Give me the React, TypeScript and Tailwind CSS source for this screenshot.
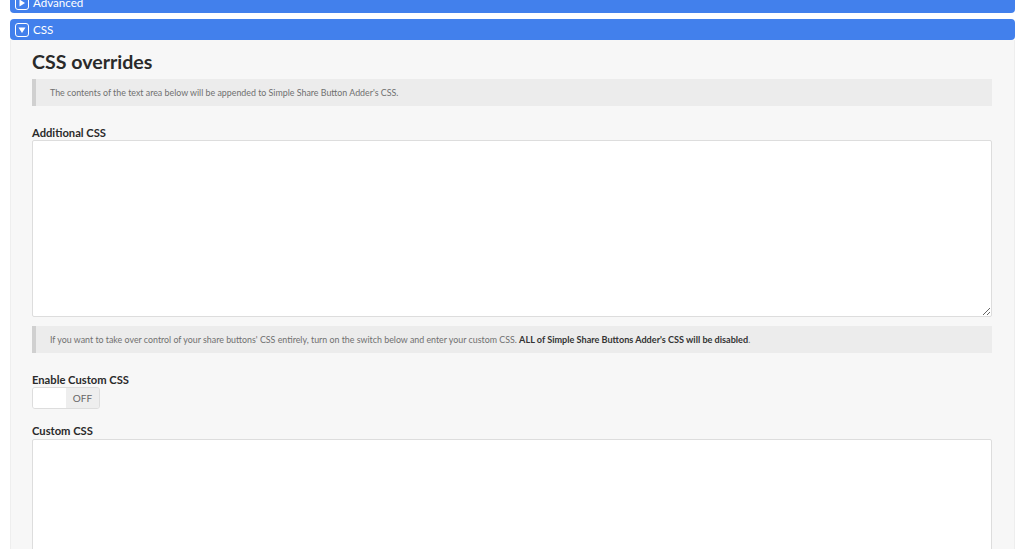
import React from 'react';

function AccordionBar({ label, open, className = '' }: { label: string; open?: boolean; className?: string }) {
  return (
    <div className={`flex h-[21px] items-center rounded-[4px] bg-[#4280ec] pl-[5px] text-white ${className}`}>
      <span className="flex h-[14px] w-[14px] items-center justify-center rounded-[3px] border border-white">
        <svg width="8" height="8" viewBox="0 0 8 8" fill="white">
          {open ? <path d="M0.5 1.5h7L4 7z" /> : <path d="M1.5 0.5v7L7 4z" />}
        </svg>
      </span>
      <span className="ml-[4px] text-[11.6px] leading-none">{label}</span>
    </div>
  );
}

function Note({ children }: { children: React.ReactNode }) {
  return (
    <div className="flex h-[27px] items-center border-l-[4px] border-[#d0d0d0] bg-[#ececec] pl-[14px] text-[8.85px] text-[#707070]">
      <p>{children}</p>
    </div>
  );
}

export default function App() {
  return (
    <div className="h-[549px] overflow-hidden bg-white font-['Lato','Noto_Sans',sans-serif] text-[#2a2a2a]">
      <div className="ml-[10px] mr-[9px]">
        <AccordionBar label="Advanced" className="-mt-[8px]" />
        <AccordionBar label="CSS" open className="mt-[6px]" />
        <div className="border-x border-[#eeeeee] bg-[#f7f7f7] pl-[21px] pr-[22px] pt-[11px] pb-[20px]">
          <h2 className="h-[28px] text-[19.6px] leading-[22px] font-bold">CSS overrides</h2>
          <Note>The contents of the text area below will be appended to Simple Share Button Adder's CSS.</Note>
          <label className="mt-[20px] block h-[14px] text-[11.2px] leading-[13px] font-bold">Additional CSS</label>
          <textarea className="block h-[177px] w-full rounded-[2px] border border-[#dddddd] bg-white" />
          <div className="mt-[9px]">
            <Note>
              If you want to take over control of your share buttons' CSS entirely, turn on the switch below and enter your custom CSS.{' '}
              <strong className="text-[9.1px] font-bold text-[#333333]">ALL of Simple Share Buttons Adder's CSS will be disabled</strong>.
            </Note>
          </div>
          <label className="mt-[20px] block h-[14px] text-[11.2px] leading-[13px] font-bold">Enable Custom CSS</label>
          <div className="flex h-[22px] w-[68px] overflow-hidden rounded-[3px] border border-[#dddddd]">
            <div className="w-[33px] bg-white" />
            <div className="flex flex-1 items-center justify-center bg-[#eeeeee] text-[10px] text-[#666666]">OFF</div>
          </div>
          <label className="mt-[15px] block h-[15px] text-[11.2px] leading-[13px] font-bold">Custom CSS</label>
          <textarea className="block h-[177px] w-full rounded-[2px] border border-[#dddddd] bg-white" />
        </div>
      </div>
    </div>
  );
}
